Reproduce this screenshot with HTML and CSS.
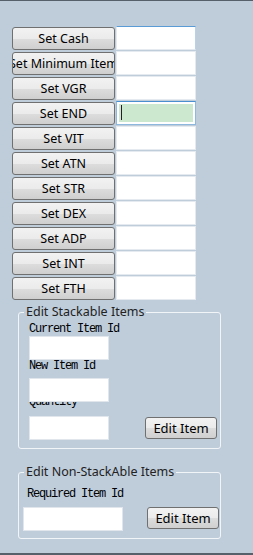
FILE: index.html
```html
<!DOCTYPE html>
<html>
<head>
<meta charset="utf-8">
<link rel="stylesheet" href="styles.css">
</head>
<body>
<div class="window">
  <div class="rows">
    <div class="row"><button class="btn"><span>Set Cash</span></button><input class="field focus-top" type="text"></div>
    <div class="row"><button class="btn"><span>Set Minimum Item</span></button><input class="field" type="text"></div>
    <div class="row"><button class="btn"><span>Set VGR</span></button><input class="field" type="text"></div>
    <div class="row"><button class="btn"><span>Set END</span></button><div class="field active"><div class="hl"><i class="caret"></i></div></div></div>
    <div class="row"><button class="btn"><span>Set VIT</span></button><input class="field" type="text"></div>
    <div class="row"><button class="btn"><span>Set ATN</span></button><input class="field" type="text"></div>
    <div class="row"><button class="btn"><span>Set STR</span></button><input class="field" type="text"></div>
    <div class="row"><button class="btn"><span>Set DEX</span></button><input class="field" type="text"></div>
    <div class="row"><button class="btn"><span>Set ADP</span></button><input class="field" type="text"></div>
    <div class="row"><button class="btn"><span>Set INT</span></button><input class="field" type="text"></div>
    <div class="row"><button class="btn"><span>Set FTH</span></button><input class="field" type="text"></div>
  </div>

  <fieldset class="group g1">
    <legend>Edit Stackable Items</legend>
    <div class="lbl l1">Current Item Id</div>
    <input class="box i1" type="text">
    <div class="lbl l2">New Item Id</div>
    <input class="box i2" type="text">
    <div class="lbl l3">Quantity</div>
    <div class="act a1">
      <input class="box" type="text">
      <button class="btn small"><span>Edit Item</span></button>
    </div>
  </fieldset>

  <fieldset class="group g2">
    <legend>Edit Non-StackAble Items</legend>
    <div class="lbl l4">Required Item Id</div>
    <div class="act a2">
      <input class="box wide" type="text">
      <button class="btn small"><span>Edit Item</span></button>
    </div>
  </fieldset>
</div>
</body>
</html>
```
FILE: styles.css
```css
html, body {
  margin: 0;
  padding: 0;
  background: #bfcddb;
}
.window {
  width: 253px;
  height: 555px;
  box-sizing: border-box;
  border-top: 1px solid #56606a;
  border-bottom: 2px solid #56606a;
  background: #bfcddb;
  overflow: hidden;
  font-family: "Noto Sans", "Liberation Sans", sans-serif;
}
.rows {
  display: flex;
  flex-direction: column;
  gap: 1px;
  padding: 25px 0 0 12px;
}
.row {
  display: flex;
  align-items: flex-start;
  gap: 1px;
  height: 24px;
}
.btn {
  box-sizing: border-box;
  width: 103px;
  height: 23px;
  margin: 1px 0 0 0;
  padding: 0;
  border: 1px solid #707070;
  border-radius: 3px;
  background: linear-gradient(#f2f2f2 0%, #ebebeb 50%, #dddddd 51%, #cfcfcf 100%);
  display: flex;
  justify-content: center;
  align-items: center;
  overflow: hidden;
  white-space: nowrap;
  font-family: "Noto Sans", "Liberation Sans", sans-serif;
  font-size: 12.5px;
  color: #000;
}
.btn span {
  flex: none;
  line-height: 16px;
}
.field {
  box-sizing: border-box;
  width: 80px;
  height: 24px;
  margin: 0;
  padding: 0;
  border: 1px solid #e4eaf0;
  background: #fff;
  outline: none;
}
.focus-top {
  border-top-color: #5b9bd5;
  border-right-color: #b9d2ea;
}
.active {
  border-color: #8fb8df;
  border-top-color: #4a90d0;
  padding: 2px 2px 2px 2px;
}
.hl {
  height: 100%;
  background: #cce8cf;
  position: relative;
}
.caret {
  position: absolute;
  left: 2px;
  top: 1px;
  width: 1px;
  height: 15px;
  background: #2a1a2a;
}
.group {
  box-sizing: border-box;
  width: 203px;
  margin: 0 0 0 18px;
  border: 1px solid #f2f5f8;
  border-radius: 3px;
  min-width: 0;
}
.group legend {
  font-family: "Noto Sans", "Liberation Sans", sans-serif;
  font-size: 12.5px;
  line-height: 16px;
  color: #222;
  padding: 0 2px;
}
.g1 {
  margin-top: 4px;
  padding: 0 3px 8px 10px;
}
.g1 legend {
  margin-left: -5px;
}
.g2 {
  margin-top: 15px;
  padding: 0 1px 7px 4px;
}
.g2 legend {
  margin-left: 1px;
}
.lbl {
  font-family: "Liberation Mono", monospace;
  font-size: 12px;
  letter-spacing: -1.2px;
  line-height: 12px;
  height: 12px;
  color: #000;
  white-space: nowrap;
}
.box {
  display: block;
  box-sizing: border-box;
  width: 80px;
  height: 24px;
  margin: 0;
  padding: 0;
  border: 1px solid #e0e6ec;
  background: #fff;
  outline: none;
}
.wide {
  width: 100px;
}
.l1 { margin-top: 3px; }
.i1 { margin-top: 1px; }
.l2 { margin-top: 0; }
.i2 { margin-top: 6px; position: relative; z-index: 1; }
.l3 { margin-top: -6px; }
.a1 { margin-top: 8px; }
.act {
  display: flex;
  justify-content: space-between;
  align-items: flex-start;
}
.small {
  width: 72px;
  height: 22px;
  margin-top: 1px;
  font-size: 13px;
}
.l4 { margin-top: 8px; margin-left: 4px; }
.a2 { margin-top: 7px; }
.a2 .small { margin-top: 0; }
```
